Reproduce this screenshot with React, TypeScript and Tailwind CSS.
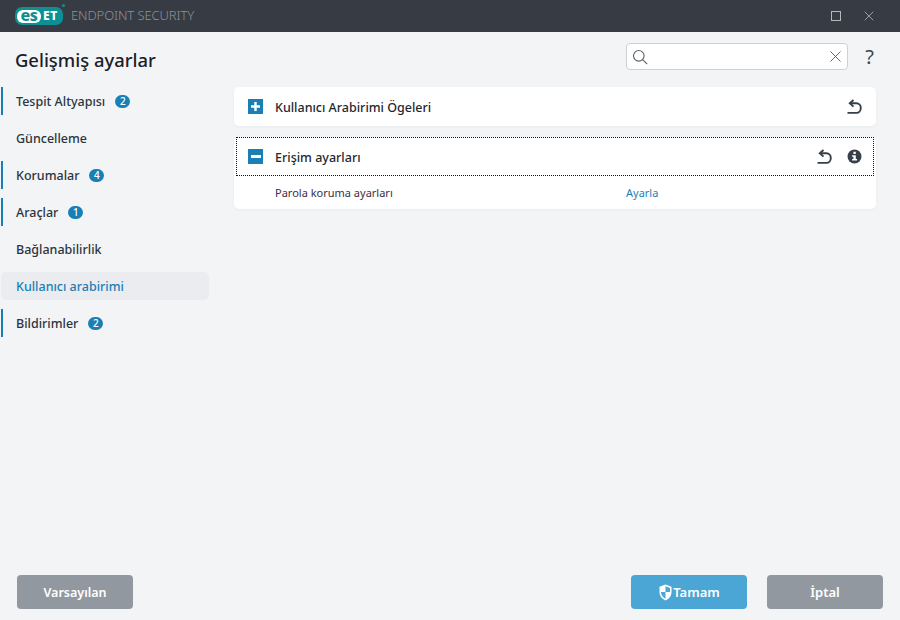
import { X } from "lucide-react";

const font = { fontFamily: '"Noto Sans", sans-serif' };

const navItems = [
  { label: "Tespit Altyapısı", badge: "2", mark: true },
  { label: "Güncelleme" },
  { label: "Korumalar", badge: "4", mark: true },
  { label: "Araçlar", badge: "1", mark: true },
  { label: "Bağlanabilirlik" },
  { label: "Kullanıcı arabirimi", active: true },
  { label: "Bildirimler", badge: "2", mark: true },
];

function ResetIcon() {
  return (
    <svg width="15" height="15" viewBox="0 0 15 15" fill="none" stroke="#37404a" strokeWidth="1.9">
      <path d="M6.500 1 2.800 4.300 6.500 7.600" />
      <path d="M3 4.300h6.500c2.500 0 4.300 2 4.300 4.600s-1.800 5-4.300 5H0.500" />
    </svg>
  );
}

function Logo() {
  return (
    <div className="relative flex h-[18px] w-[48px] items-center rounded-[7px] bg-[#0e8f93] pl-[2px]">
      <div className="flex h-[13px] w-[24px] items-center justify-center rounded-[6px] bg-white pb-[3px] text-[16px] leading-none font-extrabold tracking-[-0.5px] text-[#0e8f93]">
        es
      </div>
      <div className="ml-[2px] text-[12px] leading-none font-extrabold tracking-[0.5px] text-white">ET</div>
      <div className="absolute -top-[3px] -right-[2px] h-[3px] w-[3px] rounded-full bg-[#0e8f93]" />
    </div>
  );
}

export default function App() {
  return (
    <div className="flex h-[620px] w-[900px] flex-col overflow-hidden bg-[#f3f4f6] text-[#1f2730]" style={font}>
      <div className="flex h-8 shrink-0 items-center bg-[#363b44] pl-[15px]">
        <Logo />
        <span className="ml-[8px] text-[13px] font-light tracking-[-0.1px] text-[#8f9299]">ENDPOINT SECURITY</span>
        <div className="ml-auto flex items-center">
          <div className="mr-[20px] h-[10px] w-[10px] border border-[#b4b7bb]" />
          <X size={16} strokeWidth={1.1} className="mr-[23px] text-[#c4c6c9]" />
        </div>
      </div>

      <div className="flex h-[55px] shrink-0 items-center pl-[15px]">
        <h1 className="mt-[1px] text-[18.4px] font-medium text-[#1a2027]">Gelişmiş ayarlar</h1>
        <div className="mb-[6px] ml-auto flex h-[27px] w-[222px] items-center rounded-[4px] border border-[#cfd0d2] bg-white pr-[2px] pl-[5px]">
          <svg width="16" height="16" viewBox="0 0 16 16" fill="none" stroke="#5a6067" strokeWidth="1.1">
            <circle cx="6.800" cy="6.800" r="5.300" />
            <path d="m10.600 10.600 4.600 4.600" />
          </svg>
          <X size={19} strokeWidth={1.1} className="ml-auto text-[#4a5058]" />
        </div>
        <span className="mr-[26px] mb-[6px] ml-[17px] text-[20px] leading-none text-[#3f454d]">?</span>
      </div>

      <div className="flex min-h-0 flex-1">
        <nav className="flex w-[234px] shrink-0 flex-col gap-[9px] pl-[1px]">
          {navItems.map((item) => (
            <div
              key={item.label}
              className={`flex h-[28px] w-[208px] items-center pt-[2px] pl-[13px] text-[12.5px] font-medium ${
                item.active ? "rounded-[5px] bg-[#ebecef] text-[#1a7fb4]" : "text-[#2c343d]"
              } ${item.mark ? "border-l-2 border-[#1a7fb4]" : "pl-[15px]"}`}
            >
              {item.label}
              {item.badge && (
                <span className="-mt-[2px] ml-[10px] flex h-[13px] w-[15px] items-center justify-center rounded-full bg-[#1a7fb4] text-[10px] leading-none font-medium text-white">
                  {item.badge}
                </span>
              )}
            </div>
          ))}
        </nav>

        <main className="flex w-[642px] flex-col gap-[11px]">
          <div className="flex h-[39px] items-center rounded-[5px] bg-white pr-[14px] pl-[14px] shadow-[0_1px_3px_rgba(0,0,0,0.04)]">
            <span className="flex h-[15px] w-[15px] items-center justify-center bg-[#1a7fb4]">
              <svg width="11" height="11" viewBox="0 0 11 11" fill="#fff">
                <path d="M4.300 1h2.400v3.300H10v2.400H6.700V10H4.300V6.700H1V4.300h3.300z" />
              </svg>
            </span>
            <span className="mt-[3px] ml-[12px] text-[12.5px] font-medium">Kullanıcı Arabirimi Ögeleri</span>
            <span className="ml-auto">
              <ResetIcon />
            </span>
          </div>

          <div className="rounded-[5px] bg-white shadow-[0_1px_3px_rgba(0,0,0,0.04)]">
            <div className="mx-[2px] flex h-[39px] items-center border border-dotted border-[#111] pr-[6px] pl-[11px]">
              <span className="flex h-[15px] w-[15px] items-center justify-center bg-[#1a7fb4]">
                <span className="h-[2.500px] w-[10px] bg-white" />
              </span>
              <span className="mt-[3px] ml-[12px] text-[12.5px] font-medium">Erişim ayarları</span>
              <span className="ml-auto">
                <ResetIcon />
              </span>
              <svg className="mr-[5px] ml-[15px]" width="15" height="15" viewBox="0 0 14 14">
                <circle cx="7" cy="7" r="6.500" fill="#37404a" />
                <rect x="6" y="2.600" width="2.200" height="2" fill="#fff" />
                <path d="M4.800 5.800h3.400v3.600h1.200v1.400H4.800V9.400H6V7.200H4.800z" fill="#fff" />
              </svg>
            </div>
            <div className="flex h-[33px] items-center pt-[2px] pl-[41px] text-[11px]">
              <span className="w-[351px] text-[#3c2f45]">Parola koruma ayarları</span>
              <span className="text-[#1a7fb4]">Ayarla</span>
            </div>
          </div>
        </main>
      </div>

      <div className="flex h-[54px] shrink-0 items-start pt-[9px] pr-[17px] pl-[17px]">
        <button className="h-[34px] w-[116px] rounded-[4px] bg-[#92989f] pt-[2px] text-[12.5px] font-semibold text-white">
          Varsayılan
        </button>
        <button className="ml-auto flex h-[34px] w-[116px] items-center justify-center rounded-[4px] bg-[#4ba6d6] pt-[2px] text-[13px] font-semibold text-white">
          <svg className="-mt-[2px]" width="15" height="17" viewBox="0 0 15 15" preserveAspectRatio="none">
            <path d="M7.500 0.500 13.500 2.500V7c0 3.600-2.600 6-6 7.500C4.100 13 1.500 10.600 1.500 7V2.500z" fill="#fff" />
            <path d="M7.500 2 12 3.500V7H7.500zM7.500 7v6C5 11.800 3 9.800 3 7z" fill="#4ba6d6" />
          </svg>
          Tamam
        </button>
        <button className="ml-[20px] h-[34px] w-[116px] rounded-[4px] bg-[#92989f] pt-[2px] text-[13px] font-semibold text-white">
          İptal
        </button>
      </div>
    </div>
  );
}
